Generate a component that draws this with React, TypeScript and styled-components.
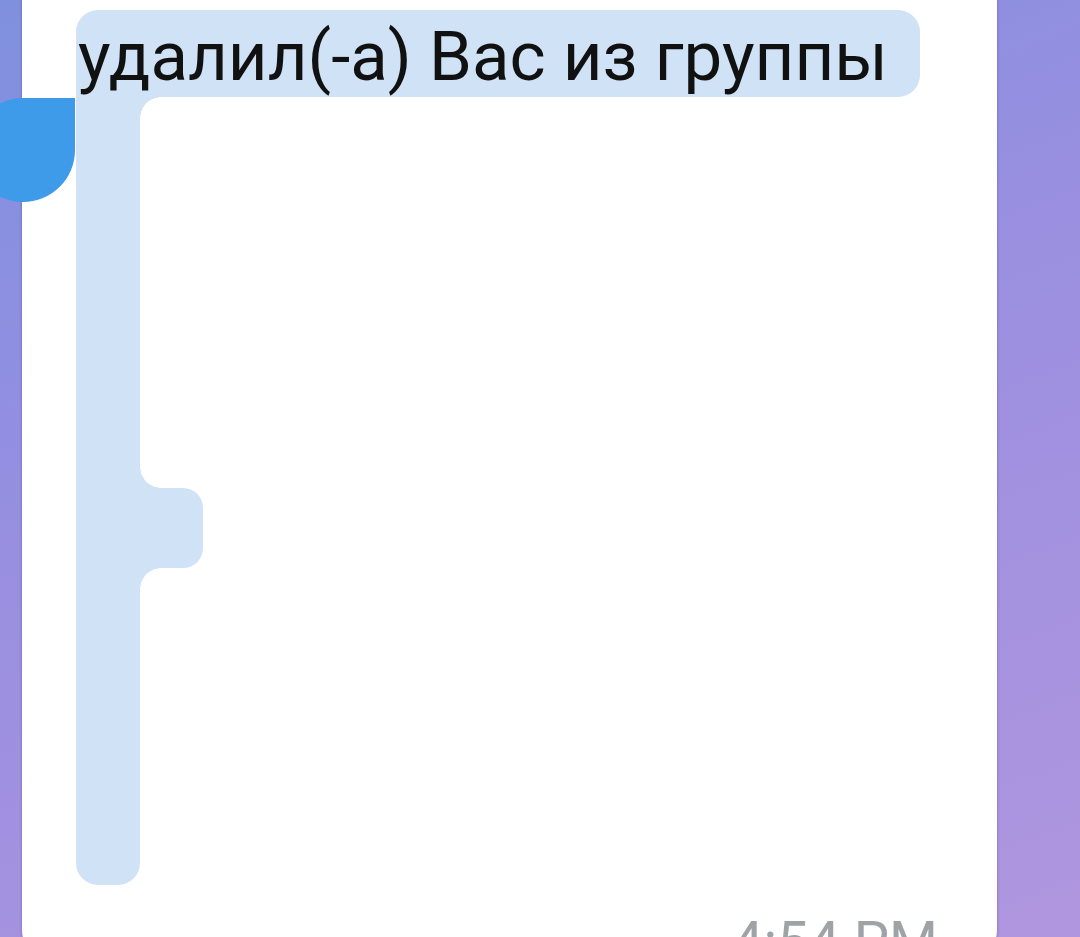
import React from "react";
import styled, { createGlobalStyle } from "styled-components";

const Global = createGlobalStyle`
  html, body { margin: 0; padding: 0; }
  body { overflow: hidden; font-family: Roboto, "Noto Sans", sans-serif; }
`;

const HL = "#cfe2f6";

const Page = styled.div`
  position: relative;
  width: 1080px;
  height: 937px;
  overflow: hidden;
  background: linear-gradient(160deg, #7f90df 0%, #9a8fe0 45%, #b096df 100%);
`;

const Card = styled.div`
  margin-left: 22px;
  margin-top: -40px;
  width: 975px;
  box-sizing: border-box;
  padding: 50px 59px 0 54px;
  height: 1000px;
  background: #fff;
  border-radius: 30px;
  box-shadow: 0 0 3px rgba(40, 30, 90, 0.35);
  display: flex;
  flex-direction: column;
  & > * { flex-shrink: 0; }
`;

const FirstLine = styled.div`
  width: 844px;
  height: 87px;
  box-sizing: border-box;
  background: ${HL};
  border-radius: 22px 22px 22px 0;
  padding-left: 2px;
  font-family: Roboto, "Noto Sans", sans-serif;
  font-size: 69px;
  line-height: 94px;
  color: #111;
  white-space: nowrap;
`;

const SelRow = styled.div`
  display: flex;
  align-items: flex-start;
`;

const Bar = styled.div`
  width: 64px;
  height: 788px;
  background: ${HL};
  border-radius: 0 0 22px 22px;
`;

const Side = styled.div`
  display: flex;
  flex-direction: column;
  align-items: flex-start;
`;

const Notch = styled.div<{ $at: string; $gap?: number }>`
  width: 21px;
  height: 21px;
  margin-top: ${(p) => p.$gap ?? 0}px;
  background: radial-gradient(circle at ${(p) => p.$at}, transparent 20.5px, ${HL} 21px);
`;

const Bump = styled.div`
  width: 63px;
  height: 80px;
  background: ${HL};
  border-radius: 0 20px 20px 0;
`;

const Time = styled.div`
  margin-top: 29px;
  align-self: flex-end;
  font-family: Roboto, "Noto Sans", sans-serif;
  font-size: 56px;
  line-height: 56px;
  color: #9ea3a8;
`;

const Handle = styled.div`
  position: absolute;
  left: -29px;
  top: 98px;
  width: 104px;
  height: 104px;
  background: #3d9be9;
  border-radius: 50% 0 50% 50%;
`;

export default function App() {
  return (
    <Page>
      <Global />
      <Card>
        <FirstLine>удалил(-а) Вас из группы</FirstLine>
        <SelRow>
          <Bar />
          <Side>
            <Notch $at="100% 100%" />
            <Notch $at="100% 0" $gap={349} />
            <Bump />
            <Notch $at="100% 100%" />
          </Side>
        </SelRow>
        <Time>4:54 PM</Time>
      </Card>
      <Handle />
    </Page>
  );
}
